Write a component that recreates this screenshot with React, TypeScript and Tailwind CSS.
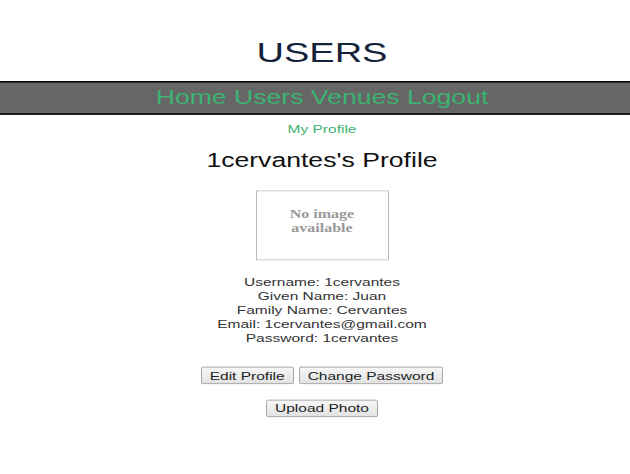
import React from "react";

const info = [
  "Username: 1cervantes",
  "Given Name: Juan",
  "Family Name: Cervantes",
  "Email: 1cervantes@gmail.com",
  "Password: 1cervantes",
];

function PageButton({ label }: { label: string }) {
  return (
    <button className="h-[23px] rounded-[2px] border border-[#9a9a9a] bg-gradient-to-b from-[#f7f7f7] to-[#e2e2e2] px-[8px] text-[15.5px] leading-[20px] text-[#222]">
      {label}
    </button>
  );
}

export default function App() {
  return (
    <div className="h-[474px] w-[630px] overflow-hidden bg-white">
      {/* the reference is squashed vertically, so lay out at full height and scale */}
      <div className="h-[632px] w-[630px] origin-top scale-y-[0.75] bg-white font-['Liberation_Sans',Arial,sans-serif]">
        <h1 className="pl-[14px] pt-[48px] text-center text-[38px] leading-[44px] text-[#14233a]">
          USERS
        </h1>

        <nav className="mt-[16px] border-y-2 border-black bg-[#666666]">
          <div className="pl-[14px] text-center text-[26.6px] leading-[41px] text-[#3cb371]">
            <a>Home</a> <a>Users</a> <a>Venues</a> <a>Logout</a>
          </div>
        </nav>

        <div className="flex flex-col items-center pl-[14px]">
          <a className="mt-[10px] text-[15.5px] leading-[18px] text-[#3cb371]">
            My Profile
          </a>

          <h2 className="mt-[18px] text-[26.6px] leading-[30px] text-[#111]">
            1cervantes's Profile
          </h2>

          <div className="mt-[25px] flex h-[93px] w-[133px] items-center justify-center border border-[#b8b8b8] pb-[11px]">
            <p className="text-center font-['Liberation_Serif',serif] text-[16px] font-bold leading-[18.67px] text-[#999]">
              No image
              <br />
              available
            </p>
          </div>

          <div className="mt-[20px] text-center text-[15.5px] leading-[18.67px] text-[#333]">
            {info.map((line) => (
              <div key={line}>{line}</div>
            ))}
          </div>

          <div className="mt-[29px] flex gap-[5px]">
            <PageButton label="Edit Profile" />
            <PageButton label="Change Password" />
          </div>

          <div className="mt-[20px]">
            <PageButton label="Upload Photo" />
          </div>
        </div>
      </div>
    </div>
  );
}
